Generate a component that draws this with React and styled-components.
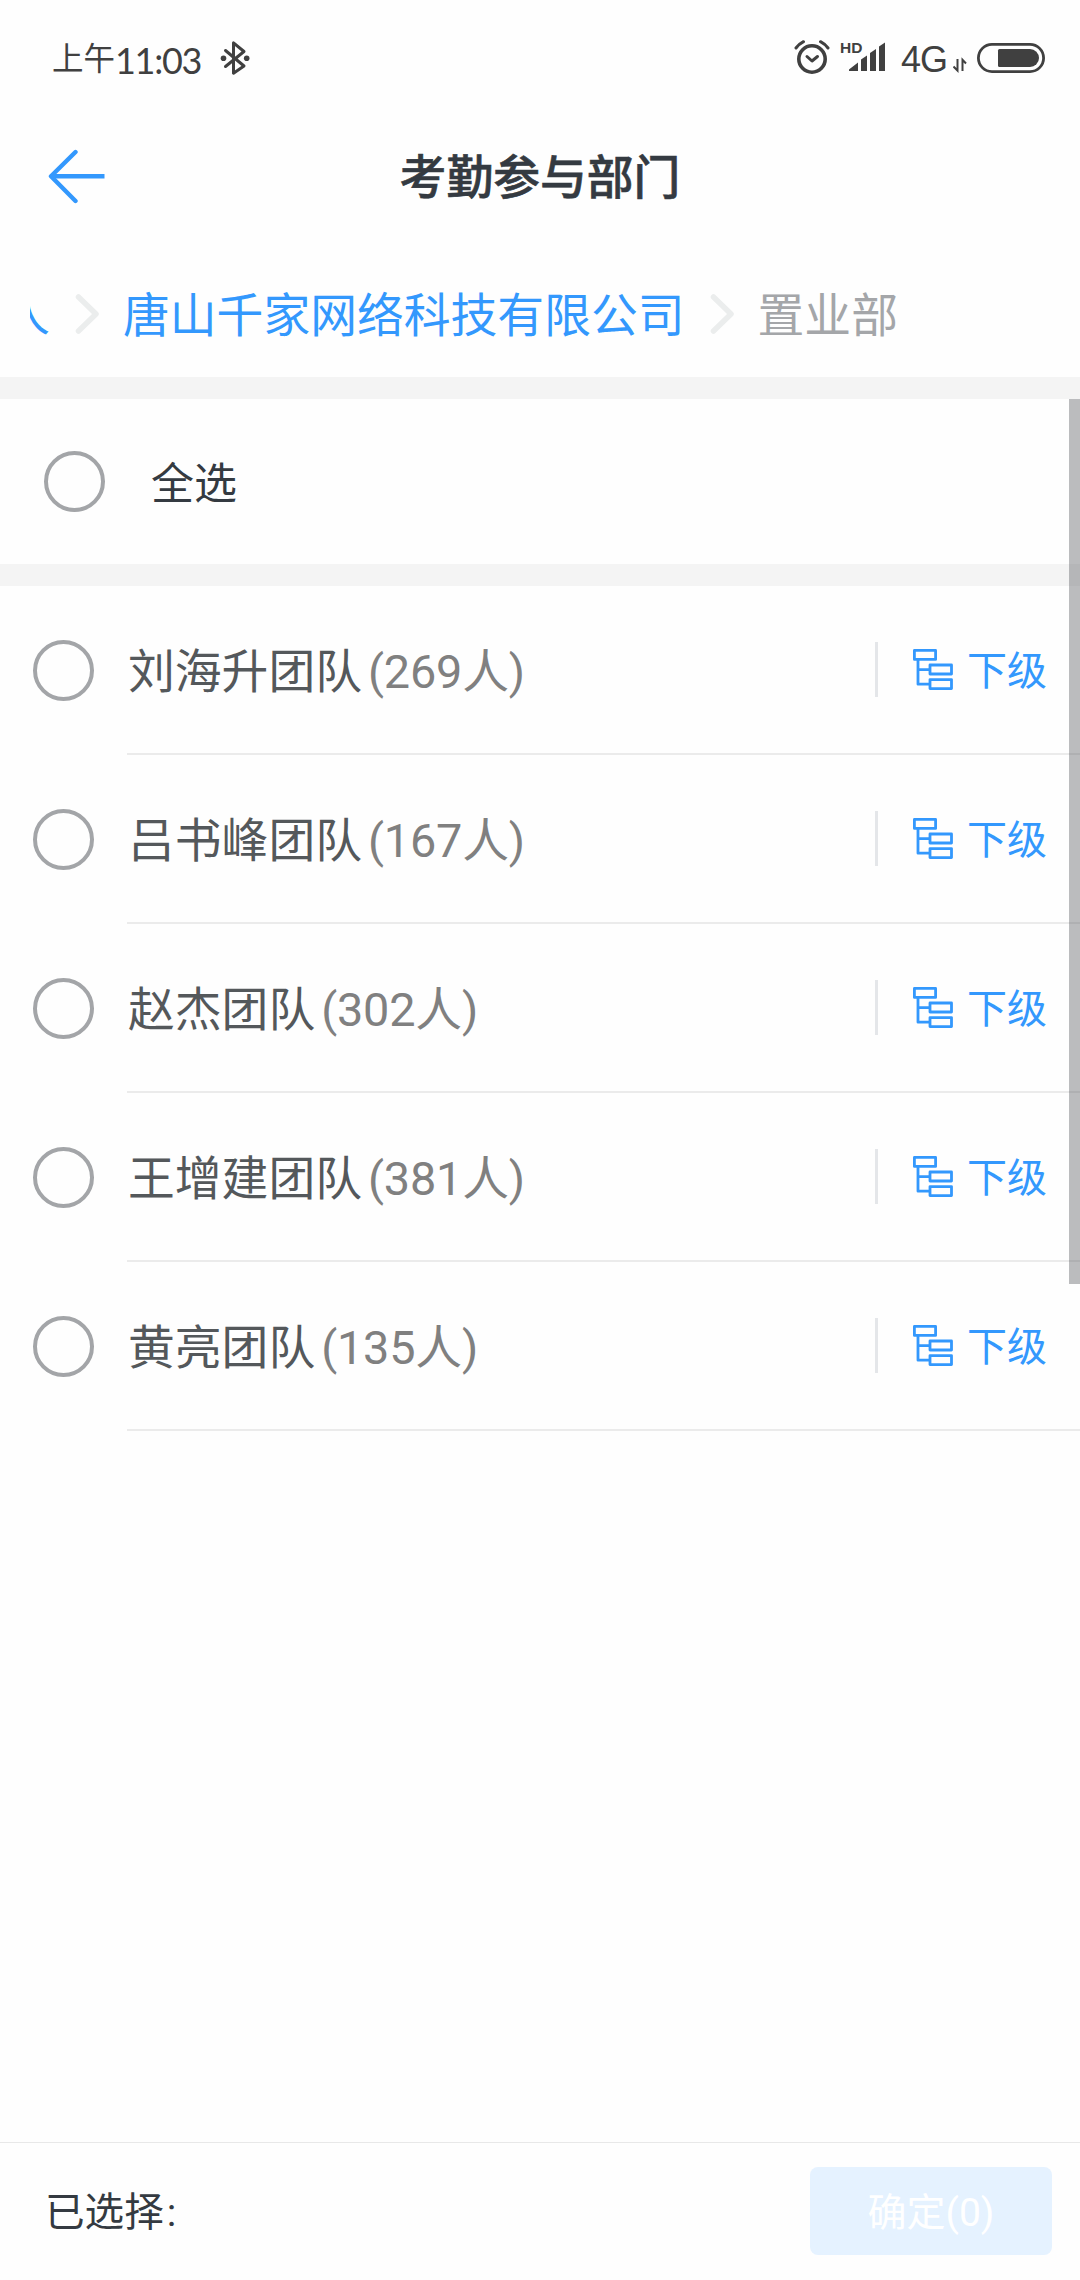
import { useState } from "react"
import styled, { createGlobalStyle } from 'styled-components'

const GlobalStyle = createGlobalStyle`
    * { box-sizing: border-box; }
    body {
        margin: 0;
        background: #fefefe;
        font-family: Roboto, "Noto Sans CJK SC", sans-serif;
        color: #343a41;
    }
    svg { display: block; flex: none; }
    button { font-family: inherit; border: none; background: none; padding: 0; margin: 0; }
`

const Page = styled.div`
    width: 1080px;
    height: 2280px;
    display: flex;
    flex-direction: column;
    overflow: hidden;
`

const StatusBar = styled.div`
    height: 116px;
    display: flex;
    align-items: center;
    justify-content: space-between;
    padding: 0 35px 0 52px;
    color: #404040;
`

const StatusGroup = styled.div`
    display: flex;
    align-items: center;
`

const Clock = styled.div`
    display: flex;
    align-items: center;
    width: 150px;
    margin-right: 18px;
    padding-top: 4px;
    font-size: 31.5px;
    line-height: 40px;
    white-space: nowrap;
`

const Digits = styled.span`
    font-family: Lato, sans-serif;
    font-size: 36px;
    letter-spacing: -1.3px;
`

const Network = styled.div`
    width: 47px;
    margin: 0 5px 0 15px;
    padding-top: 3px;
    font-family: "Liberation Sans", sans-serif;
    font-size: 36px;
    line-height: 40px;
    letter-spacing: -1px;
`

const StatusGap = styled.div`
    width: 10px;
`

const TitleBar = styled.header`
    height: 121px;
    display: grid;
    grid-template-columns: 160px 1fr 160px;
    align-items: center;
`

const BackButton = styled.button`
    padding: 0 0 2px 47px;
`

const Title = styled.h1`
    margin: 0;
    padding-top: 2px;
    font-size: 46.8px;
    line-height: 60px;
    font-weight: 500;
    text-align: center;
    -webkit-text-stroke: 0.6px #343a41;
`

const Breadcrumb = styled.nav`
    height: 140px;
    display: flex;
    align-items: center;
    padding: 14px 0 0 30px;
    font-size: 46.8px;
    line-height: 60px;
    white-space: nowrap;
`

// earlier levels are scrolled out to the left
const ScrolledCrumb = styled.span`
    width: 20px;
    padding-top: 2px;
    display: flex;
    justify-content: flex-end;
    overflow: hidden;
    color: #3398fd;
`

const Crumb = styled.span`
    padding-top: 3px;
    color: ${props => props.$current ? '#a4a6a9' : '#3398fd'};
`

const Separator = styled.svg`
    margin: 0 23px 0 25px;
`

const Gap = styled.div`
    height: 22px;
    background: #f4f4f4;
`

const ListArea = styled.main`
    position: relative;
    flex: 1;
`

const ScrollThumb = styled.div`
    position: absolute;
    top: 0;
    right: 0;
    width: 11px;
    height: 885px;
    background: rgba(60, 62, 66, 0.34);
`

const Radio = styled.button`
    width: 61px;
    height: 61px;
    flex: none;
    border: 4px solid #a3a5a8;
    border-radius: 50%;
    background: ${props => props.$checked ? '#3398fd' : 'transparent'};
`

const SelectAll = styled.div`
    height: 165px;
    display: flex;
    align-items: center;
    gap: 46px;
    padding-left: 44px;
    font-size: 43px;
    line-height: 60px;
`

const SelectAllLabel = styled.span`
    padding-top: 4px;
`

const Row = styled.div`
    height: 169px;
    display: flex;
    align-items: center;
    padding-left: 33px;
`

const RowBody = styled.div`
    flex: 1;
    height: 169px;
    margin-left: 33px;
    padding: 0 33px 0 1px;
    display: flex;
    align-items: center;
    border-bottom: 2px solid #ebebeb;
    font-size: 46.8px;
    line-height: 60px;
`

const Name = styled.span`
    padding-top: 4px;
    color: #54585b;
`

const Count = styled.span`
    flex: 1;
    margin-left: 6px;
    padding-top: 4px;
    letter-spacing: -0.2px;
    color: #808080;
`

const SubLink = styled.button`
    height: 55px;
    display: flex;
    align-items: center;
    gap: 14px;
    padding-left: 35px;
    border-left: 3px solid #e4e6e9;
    color: #3398fd;
    font-size: 40px;
    line-height: 55px;
`

const SubLabel = styled.span`
    padding-top: 3px;
`

const Footer = styled.footer`
    height: 138px;
    display: flex;
    align-items: center;
    justify-content: space-between;
    padding: 0 28px 0 45px;
    border-top: 1px solid #e8e8e8;
    font-size: 39.6px;
    line-height: 54px;
`

const SelectedLabel = styled.div`
    display: flex;
    gap: 3px;
    padding-top: 3px;
`

const ConfirmButton = styled.button`
    width: 242px;
    height: 88px;
    margin-bottom: 1px;
    padding-bottom: 4px;
    border-radius: 8px;
    background: #e5f2ff;
    color: #fff;
    font-size: 39px;
`

const BluetoothIcon = () => (
    <svg width="30" height="36" viewBox="220 40 30 36">
        <path d="M225.500 50.500 L244 66 L233.500 73.200 V42.800 L244 51.500 L225.500 66.500" fill="none" stroke="#404040" strokeWidth="3" strokeLinecap="round" strokeLinejoin="round" />
        <circle cx="223.500" cy="58.300" r="2.800" fill="#404040" />
        <circle cx="246.700" cy="58.300" r="2.800" fill="#404040" />
    </svg>
)

const AlarmIcon = () => (
    <svg width="36" height="36" viewBox="794 40 36 36">
        <g fill="none" stroke="#404040" strokeLinecap="round" strokeLinejoin="round">
            <circle cx="812" cy="59" r="13.200" strokeWidth="3.600" />
            <path d="M796 48 Q799 44 803.500 41.700 M820.500 41.700 Q825 44 828 48" strokeWidth="3" />
            <path d="M807 56.500 L812 61 L817.500 56.500" strokeWidth="3" />
        </g>
    </svg>
)

const SignalIcon = () => (
    <svg width="46" height="36" viewBox="840 40 46 36">
        <text x="840" y="53" fontFamily="Liberation Sans, sans-serif" fontSize="15.500" fontWeight="bold" fill="#404040">HD</text>
        <path d="M849 71 V69.500 L858 62.500 V71 Z M861 71 V59.500 L867 55.500 V71 Z M870 71 V53 L876 49 V71 Z M879 71 V46.500 L885 42.500 V71 Z" fill="#404040" />
    </svg>
)

const DataIcon = () => (
    <svg width="14" height="36" viewBox="952 40 14 36">
        <path d="M956.500 59 V70.500 L952.500 66.500 M961.500 71 V59.800 L965 63.500" fill="none" stroke="#404040" strokeWidth="2" />
    </svg>
)

const BatteryIcon = () => (
    <svg width="68" height="36" viewBox="977 40 68 36">
        <rect x="978.400" y="44.400" width="65.200" height="27.200" rx="13.600" fill="none" stroke="#404040" strokeWidth="2.800" />
        <path d="M999.500 49 H1030 A9 9 0 0 1 1030 67 H999.500 Q998 67 998 65.500 V50.500 Q998 49 999.500 49 Z" fill="#404040" />
    </svg>
)

const BackIcon = () => (
    <svg width="58" height="56" viewBox="0 0 58 56">
        <path d="M28.500 4 L4 28.300 L28.500 53" fill="none" stroke="#3398fd" strokeWidth="4.400" strokeLinecap="round" strokeLinejoin="round" />
        <path d="M4 28.300 H57.500" stroke="#3398fd" strokeWidth="4.500" />
    </svg>
)

const Chevron = () => (
    <Separator width="25" height="40" viewBox="0 0 25 40">
        <path d="M3.500 3 L21 20 L3.500 37" fill="none" stroke="#ebeded" strokeWidth="5.500" strokeLinecap="round" strokeLinejoin="round" />
    </Separator>
)

const LevelIcon = () => (
    <svg width="40" height="41" viewBox="0 0 40 41">
        <g fill="none" stroke="#3398fd" strokeWidth="2.800" strokeLinejoin="round">
            <rect x="1.400" y="1.400" width="21.200" height="9" />
            <rect x="17" y="16" width="21.500" height="9" />
            <rect x="17" y="30.600" width="21.500" height="9" />
            <path d="M5 10.500 V35.200 H17 M5 20.600 H17" />
        </g>
    </svg>
)

const departments = [
    { id: 1, name: '刘海升团队', count: 269 },
    { id: 2, name: '吕书峰团队', count: 167 },
    { id: 3, name: '赵杰团队', count: 302 },
    { id: 4, name: '王增建团队', count: 381 },
    { id: 5, name: '黄亮团队', count: 135 },
]

const App = function() {
    let [selected, setSelected] = useState([]);
    let allChecked = selected.length == departments.length;

    function toggle(id) {
        setSelected(selected.includes(id) ? selected.filter(el => el != id) : [...selected, id]);
    }

    function toggleAll() {
        setSelected(allChecked ? [] : departments.map(el => el.id));
    }

    return (
        <Page>
            <GlobalStyle />
            <StatusBar>
                <StatusGroup>
                    <Clock>上午<Digits>11:03</Digits></Clock>
                    <BluetoothIcon />
                </StatusGroup>
                <StatusGroup>
                    <AlarmIcon />
                    <StatusGap />
                    <SignalIcon />
                    <Network>4G</Network>
                    <DataIcon />
                    <StatusGap />
                    <BatteryIcon />
                </StatusGroup>
            </StatusBar>
            <TitleBar>
                <BackButton><BackIcon /></BackButton>
                <Title>考勤参与部门</Title>
            </TitleBar>
            <Breadcrumb>
                <ScrolledCrumb>人</ScrolledCrumb>
                <Chevron />
                <Crumb>唐山千家网络科技有限公司</Crumb>
                <Chevron />
                <Crumb $current>置业部</Crumb>
            </Breadcrumb>
            <Gap />
            <ListArea>
                <SelectAll>
                    <Radio $checked={allChecked} onClick={toggleAll} />
                    <SelectAllLabel>全选</SelectAllLabel>
                </SelectAll>
                <Gap />
                {departments.map(el => (
                    <Row key={el.id}>
                        <Radio $checked={selected.includes(el.id)} onClick={() => toggle(el.id)} />
                        <RowBody>
                            <Name>{el.name}</Name>
                            <Count>({el.count}人)</Count>
                            <SubLink><LevelIcon /><SubLabel>下级</SubLabel></SubLink>
                        </RowBody>
                    </Row>
                ))}
                <ScrollThumb />
            </ListArea>
            <Footer>
                <SelectedLabel>已选择<span>:</span></SelectedLabel>
                <ConfirmButton>确定({selected.length})</ConfirmButton>
            </Footer>
        </Page>
    )
}

export default App
